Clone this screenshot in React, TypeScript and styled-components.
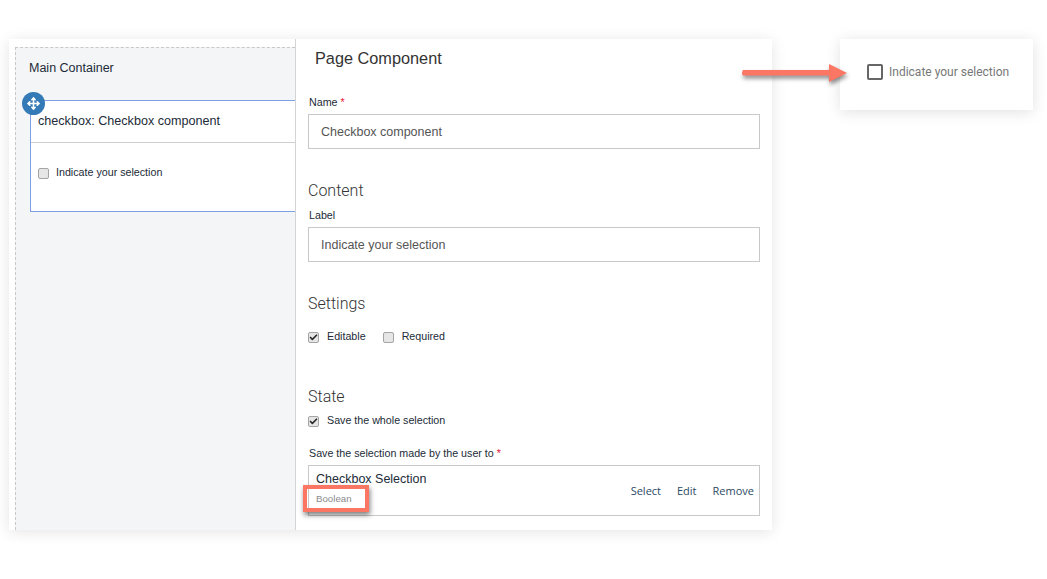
import styled, { createGlobalStyle } from "styled-components";
import { Check, Move } from "lucide-react";

const GlobalStyle = createGlobalStyle`
  html, body {
    margin: 0;
    background: #fff;
    overflow: hidden;
  }
  body {
    font-family: "Liberation Sans", Arial, sans-serif;
    color: #222b37;
  }
`;

const Page = styled.div`
  position: relative;
  width: 1047px;
  height: 579px;
  box-sizing: border-box;
  padding: 39px 0 0 9px;
  display: flex;
  align-items: flex-start;
  gap: 68px;
`;

const Sheet = styled.div`
  width: 763px;
  height: 491px;
  display: flex;
  background: #fff;
  box-shadow: 0 2px 14px rgba(0, 0, 0, 0.11);
`;

const Canvas = styled.div`
  width: 286px;
  box-sizing: border-box;
  padding: 8px 0 0 6px;
  display: flex;
`;

const Dropzone = styled.div`
  flex: 1;
  box-sizing: border-box;
  padding: 13px 0 0 14px;
  background: #f4f5f7;
  border-top: 1px dashed #c8c8c8;
  border-left: 1px dashed #c8c8c8;
`;

const ZoneTitle = styled.div`
  margin-left: -1px;
  font-size: 12.5px;
  line-height: 14px;
  height: 39px;
`;

const Widget = styled.div`
  position: relative;
  height: 112px;
  box-sizing: border-box;
  background: #fff;
  border: 1px solid #7f9fe3;
  border-right: 0;
`;

const MoveBadge = styled.div`
  position: absolute;
  left: -9px;
  top: -9px;
  width: 23px;
  height: 23px;
  border-radius: 50%;
  background: #337ab7;
  color: #fff;
  display: flex;
  align-items: center;
  justify-content: center;
`;

const WidgetHead = styled.div`
  height: 42px;
  box-sizing: border-box;
  padding: 12px 0 0 7px;
  font-size: 12.6px;
  line-height: 16px;
  border-bottom: 1px solid #cfcfcf;
`;

const WidgetBody = styled.div`
  padding: 22px 0 0 7px;
`;

const Form = styled.div`
  flex: 1;
  box-sizing: border-box;
  padding: 9px 12px 0 12px;
  border-left: 1px solid #d4d4d4;
`;

const FormTitle = styled.h2`
  margin: 0 0 0 7px;
  height: 47px;
  box-sizing: border-box;
  font-size: 16.3px;
  line-height: 20px;
  font-weight: 400;
  color: #333;
`;

const FieldLabel = styled.label`
  display: block;
  padding-left: 1px;
  font-size: 10.7px;
  line-height: 14px;
  margin-bottom: 5px;
`;

const Required = styled.span`
  color: #e5173f;
`;

const TextField = styled.div`
  height: 35px;
  box-sizing: border-box;
  padding: 0 12px;
  display: flex;
  align-items: center;
  border: 1px solid #c9c9c9;
  font-size: 12.5px;
  color: #555;
`;

const SectionTitle = styled.h3<{ $top: number; $bottom: number }>`
  margin: ${(p) => p.$top}px 0 ${(p) => p.$bottom}px;
  font-family: Roboto, sans-serif;
  font-size: 16px;
  line-height: 20px;
  font-weight: 300;
  color: #333;
`;

const CheckRow = styled.div<{ $bottom?: number }>`
  display: flex;
  align-items: center;
  gap: 17px;
  height: 16px;
  margin-bottom: ${(p) => p.$bottom ?? 0}px;
`;

const CheckItem = styled.div<{ $gap?: number }>`
  display: flex;
  align-items: center;
  gap: ${(p) => p.$gap ?? 8}px;
`;

const Box = styled.span`
  width: 9px;
  height: 9px;
  margin-top: 2px;
  border: 1px solid #a4a4a4;
  border-radius: 2px;
  background: #e6e6e6;
  color: #2b2b2b;
  display: flex;
  align-items: center;
  justify-content: center;
  flex: none;
`;

const CheckText = styled.span`
  font-size: 10.7px;
  line-height: 14px;
`;

const Picker = styled.div`
  height: 51px;
  box-sizing: border-box;
  padding: 6px 5px 0 7px;
  display: flex;
  justify-content: space-between;
  border: 1px solid #c9c9c9;
`;

const PickerName = styled.div`
  font-size: 12.5px;
  line-height: 15px;
`;

const PickerType = styled.div`
  margin-top: 6px;
  font-size: 9.7px;
  line-height: 11px;
  color: #8a8a8a;
`;

const PickerActions = styled.div`
  display: flex;
  gap: 16px;
  padding-top: 12px;
  font-family: "Open Sans", sans-serif;
  font-size: 11px;
  line-height: 14px;
  color: #2c4a63;
`;

const Preview = styled.div`
  width: 193px;
  height: 71px;
  box-sizing: border-box;
  padding: 0 0 5px 27px;
  display: flex;
  align-items: center;
  gap: 6px;
  background: #fff;
  box-shadow: 0 2px 14px rgba(0, 0, 0, 0.12);
`;

const PreviewBox = styled.span`
  width: 12px;
  height: 12px;
  border: 2px solid #666;
  border-radius: 2px;
`;

const PreviewText = styled.span`
  font-family: Roboto, sans-serif;
  font-size: 12px;
  color: #777;
`;

const Arrow = styled.svg`
  position: absolute;
  left: 740px;
  top: 60px;
  overflow: visible;
  filter: drop-shadow(1px 3px 2px rgba(0, 0, 0, 0.45));
`;

const Highlight = styled.div`
  position: absolute;
  left: 303px;
  top: 485px;
  width: 58px;
  height: 19px;
  border: 4px solid #fb7764;
  box-shadow: 1px 3px 5px rgba(0, 0, 0, 0.5);
`;

function CheckBox({ checked }: { checked?: boolean }) {
  return <Box>{checked && <Check size={9} strokeWidth={4.5} />}</Box>;
}

export default function App() {
  return (
    <Page>
      <GlobalStyle />
      <Sheet>
        <Canvas>
          <Dropzone>
            <ZoneTitle>Main Container</ZoneTitle>
            <Widget>
              <MoveBadge>
                <Move size={13} strokeWidth={3} />
              </MoveBadge>
              <WidgetHead>checkbox: Checkbox component</WidgetHead>
              <WidgetBody>
                <CheckItem $gap={7}>
                  <CheckBox />
                  <CheckText>Indicate your selection</CheckText>
                </CheckItem>
              </WidgetBody>
            </Widget>
          </Dropzone>
        </Canvas>
        <Form>
          <FormTitle>Page Component</FormTitle>
          <FieldLabel>
            Name <Required>*</Required>
          </FieldLabel>
          <TextField>Checkbox component</TextField>
          <SectionTitle $top={32} $bottom={7}>
            Content
          </SectionTitle>
          <FieldLabel>Label</FieldLabel>
          <TextField>Indicate your selection</TextField>
          <SectionTitle $top={32} $bottom={14}>
            Settings
          </SectionTitle>
          <CheckRow $bottom={43}>
            <CheckItem>
              <CheckBox checked />
              <CheckText>Editable</CheckText>
            </CheckItem>
            <CheckItem>
              <CheckBox />
              <CheckText>Required</CheckText>
            </CheckItem>
          </CheckRow>
          <SectionTitle $top={0} $bottom={5}>
            State
          </SectionTitle>
          <CheckRow $bottom={18}>
            <CheckItem>
              <CheckBox checked />
              <CheckText>Save the whole selection</CheckText>
            </CheckItem>
          </CheckRow>
          <FieldLabel>
            Save the selection made by the user to <Required>*</Required>
          </FieldLabel>
          <Picker>
            <div>
              <PickerName>Checkbox Selection</PickerName>
              <PickerType>Boolean</PickerType>
            </div>
            <PickerActions>
              <span>Select</span>
              <span>Edit</span>
              <span>Remove</span>
            </PickerActions>
          </Picker>
        </Form>
      </Sheet>
      <Preview>
        <PreviewBox />
        <PreviewText>Indicate your selection</PreviewText>
      </Preview>
      <Arrow width="100" height="24" viewBox="0 0 100 24">
        <path d="M3 10 H89 V4 L107 13 L89 22 V15.5 H3 Q1 13 3 10 Z" fill="#fb7764" />
      </Arrow>
      <Highlight />
    </Page>
  );
}
